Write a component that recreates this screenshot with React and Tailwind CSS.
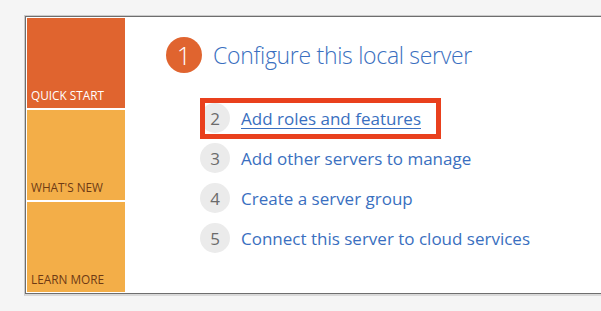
import React from "react";

const font = { fontFamily: '"Open Sans", "Noto Sans", sans-serif' };

function Step({ n, text, link }) {
  return (
    <div className="flex items-center h-[30px]">
      <div className="w-[30px] h-[30px] rounded-full bg-[#ebebeb] flex items-center justify-center text-[17px] text-[#6b6b6b] leading-none">
        {n}
      </div>
      <div
        className={
          "ml-[11px] text-[17px] leading-none text-[#3a6fc0] whitespace-nowrap" +
          (link ? " underline underline-offset-[3px] decoration-1" : "")
        }
      >
        {text}
      </div>
    </div>
  );
}

export default function App() {
  return (
    <div
      className="w-[601px] h-[311px] bg-[#f5f5f5] pt-[15px] pl-[24px] overflow-hidden"
      style={font}
    >
      <div className="w-[600px] border-t border-l border-[#cbcbcb] border-b-2 border-b-[#d9d9d9]">
        <div className="h-[278px] border border-r-0 border-[#6e6e6e] bg-white p-px flex">
          <div className="w-[98px] flex flex-col gap-[2px] shrink-0">
            <div className="h-[90px] bg-[#e0642f] flex items-end pl-[4px] pb-[6px] text-[11.8px] text-white leading-none">
              QUICK START
            </div>
            <div className="h-[90px] bg-[#f3ae48] flex items-end pl-[4px] pb-[6px] text-[11.8px] text-[#6e3a14] leading-none">
              WHAT'S NEW
            </div>
            <div className="h-[90px] bg-[#f3ae48] flex items-end pl-[4px] pb-[6px] text-[11.8px] text-[#6e3a14] leading-none">
              LEARN MORE
            </div>
          </div>
          <div className="flex-1 pl-[41px] pt-[19px]">
            <div className="flex items-center h-[36px]">
              <div className="w-[36px] h-[36px] rounded-full bg-[#e0642f] flex items-center justify-center text-white text-[25px] font-light leading-none">
                1
              </div>
              <div className="ml-[11px] text-[23px] tracking-[-0.3px] font-light text-[#3a6fc0] leading-none whitespace-nowrap">
                Configure this local server
              </div>
            </div>
            <div className="ml-[34px] mt-[30px] flex flex-col gap-[10px]">
              <div className="relative">
                <Step n="2" text="Add roles and features" link />
                <div className="absolute left-0 top-[-5px] w-[241px] h-[41px] border-[5px] border-[#e9401d]" />
              </div>
              <Step n="3" text="Add other servers to manage" />
              <Step n="4" text="Create a server group" />
              <Step n="5" text="Connect this server to cloud services" />
            </div>
          </div>
        </div>
      </div>
    </div>
  );
}
